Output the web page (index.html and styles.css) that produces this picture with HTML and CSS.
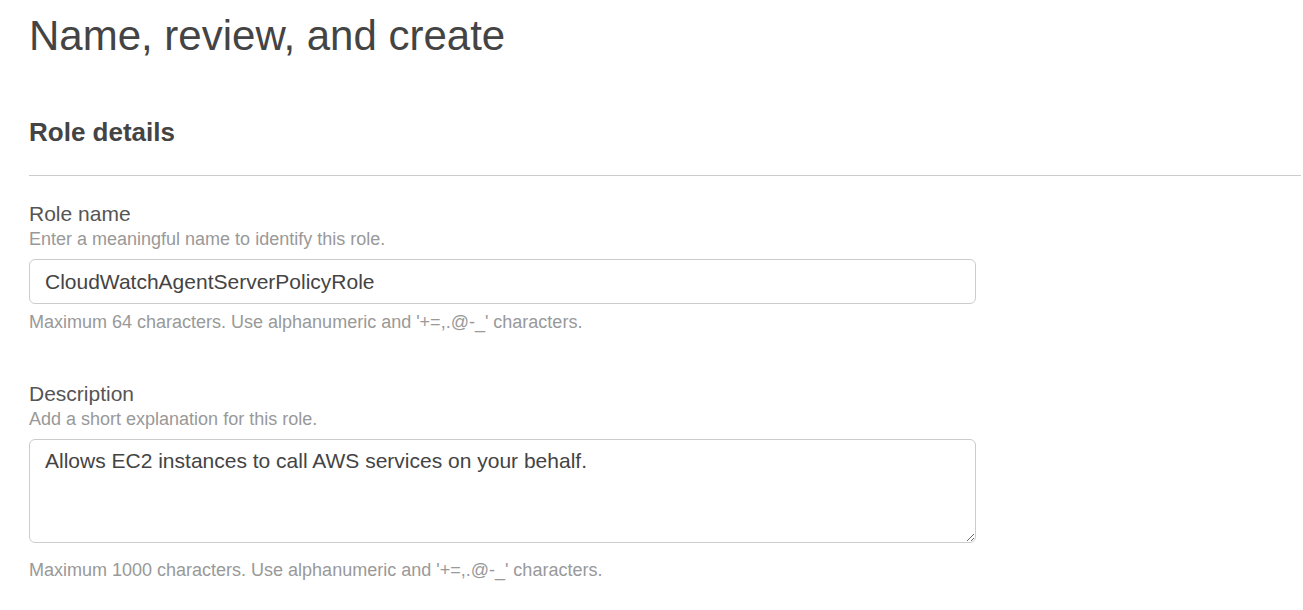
FILE: index.html
```html
<!DOCTYPE html>
<html lang="en">
<head>
<meta charset="utf-8">
<title>Name, review, and create</title>
<link rel="stylesheet" href="styles.css">
</head>
<body>
<main class="page">
  <h1 class="page-title">Name, review, and create</h1>
  <section class="container">
    <header class="container-header">
      <h2 class="container-title">Role details</h2>
    </header>
    <div class="container-body">
      <div class="field">
        <label class="field-label" for="role-name">Role name</label>
        <div class="field-description">Enter a meaningful name to identify this role.</div>
        <input class="field-input" id="role-name" type="text" value="CloudWatchAgentServerPolicyRole">
        <div class="field-constraint">Maximum 64 characters. Use alphanumeric and '+=,.@-_' characters.</div>
      </div>
      <div class="field field-spaced">
        <label class="field-label" for="role-desc">Description</label>
        <div class="field-description">Add a short explanation for this role.</div>
        <textarea class="field-textarea" id="role-desc">Allows EC2 instances to call AWS services on your behalf.</textarea>
        <div class="field-constraint field-constraint-textarea">Maximum 1000 characters. Use alphanumeric and '+=,.@-_' characters.</div>
      </div>
    </div>
  </section>
</main>
</body>
</html>
```
FILE: styles.css
```css
html, body {
  margin: 0;
  padding: 0;
  background: #ffffff;
}

body {
  font-family: "Liberation Sans", Arial, sans-serif;
  color: #444444;
}

.page {
  padding: 11px 2px 0 29px;
}

.page-title {
  margin: 0;
  font-size: 42px;
  line-height: 50px;
  font-weight: 400;
  color: #444444;
}

.container {
  margin-top: 55px;
}

.container-header {
  padding-bottom: 27px;
  border-bottom: 1px solid #cccccc;
}

.container-title {
  margin: 0;
  font-size: 26px;
  line-height: 32px;
  font-weight: 700;
  color: #444444;
}

.container-body {
  padding-top: 25px;
  width: 947px;
}

.field {
  display: flex;
  flex-direction: column;
}

.field-spaced {
  margin-top: 47px;
}

.field-label {
  font-size: 21px;
  line-height: 26px;
  color: #555555;
}

.field-description {
  font-size: 18px;
  line-height: 24px;
  color: #999999;
}

.field-input,
.field-textarea {
  box-sizing: border-box;
  width: 947px;
  margin: 8px 0 0;
  border: 1px solid #cccccc;
  border-radius: 6px;
  font-family: "Liberation Sans", Arial, sans-serif;
  font-size: 21px;
  color: #444444;
  background: #ffffff;
  outline: none;
}

.field-input {
  height: 45px;
  padding: 0 15px;
}

.field-textarea {
  height: 104px;
  padding: 8px 15px;
  line-height: 26px;
  resize: vertical;
}

.field-constraint {
  margin-top: 6px;
  font-size: 18px;
  line-height: 24px;
  color: #999999;
}

.field-constraint-textarea {
  margin-top: 15px;
}
```
